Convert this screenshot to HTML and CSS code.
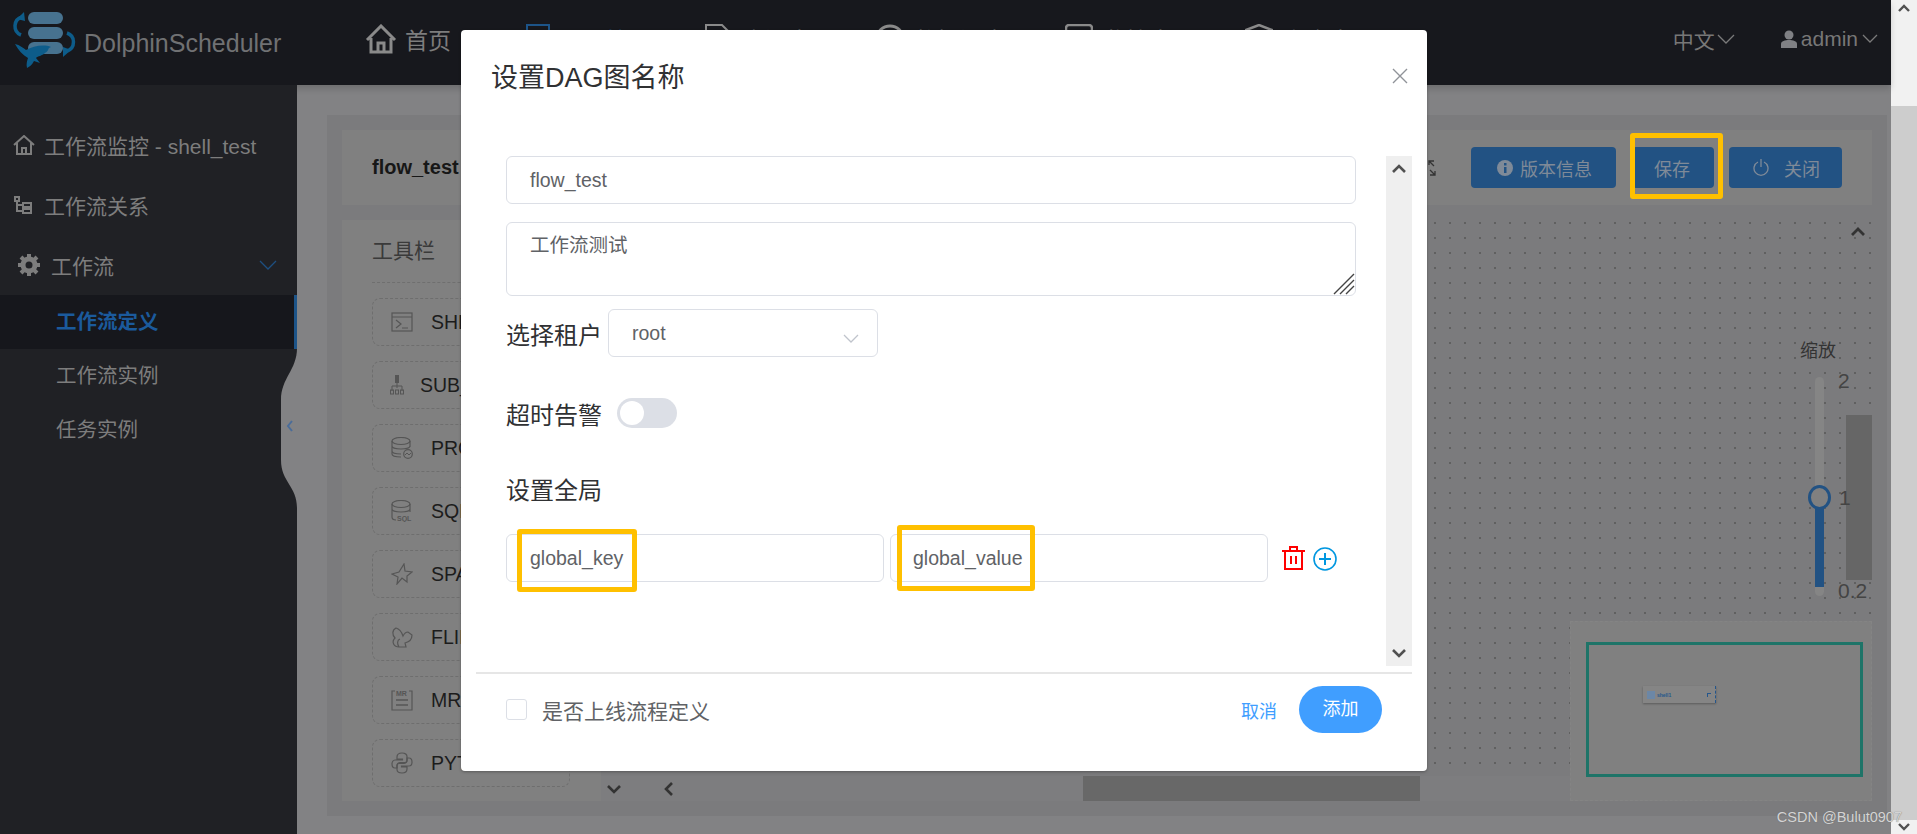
FILE: index.html
```html
<!DOCTYPE html>
<html lang="zh-CN">
<head>
  <meta charset="UTF-8" />
  <title>DolphinScheduler</title>
  <link rel="stylesheet" href="styles.css">
</head>
<body>

<div class="page">
  <header class="topbar">
    <div class="logo">
      <svg class="logo-mark" viewBox="0 0 72 58" width="72" height="58">
        <rect x="19" y="1" width="35" height="12" rx="6" fill="#47728f"/>
        <rect x="19" y="16" width="35" height="12" rx="6" fill="#47728f"/>
        <rect x="19" y="31" width="35" height="12" rx="6" fill="#47728f"/>
        <path d="M13 6 A9.5 9.5 0 0 0 12 24" fill="none" stroke="#0d5c8a" stroke-width="3.5"/>
        <path d="M8 8 L15 1 L16 10 Z" fill="#0d5c8a"/>
        <path d="M58 22 A9.5 9.5 0 0 1 58 40" fill="none" stroke="#0d5c8a" stroke-width="3.5"/>
        <path d="M62 39 L54 46 L54 36 Z" fill="#0d5c8a"/>
        <path d="M6 33 C11 34 14 37 17 39 C24 35 35 33 42 36 C38 37 41 39 36 42 C33 45 29 45 27 47 L31 52 L25 50 C23 54 20 56 18 57 C17 53 18 50 19 47 C14 44 9 39 6 33 Z" fill="#0d5c8a"/>
      </svg>
      <span class="logo-text">DolphinScheduler</span>
    </div>
    <nav class="nav">
      <div class="nav-item">
        <svg class="nav-icon nav-icon-home" viewBox="0 0 32 30" width="32" height="30"><path d="M2 16 L16 2 L30 16 M6 14 V28 H26 V14 M13 28 V19 H19 V28" fill="none" stroke="#8a8a8a" stroke-width="3"/></svg>
        <span>首页</span>
      </div>
      <div class="nav-item nav-active">
        <svg class="nav-icon" viewBox="0 0 24 30" width="24" height="30"><rect x="1" y="1" width="22" height="27" fill="none" stroke="#1d5488" stroke-width="2"/></svg>
        <span>项目管理</span>
      </div>
      <div class="nav-item">
        <svg class="nav-icon" viewBox="0 0 28 30" width="28" height="30"><path d="M2 1 H18 L26 9 V29 H2 Z" fill="none" stroke="#8a8a8a" stroke-width="2"/></svg>
        <span>资源中心</span>
      </div>
      <div class="nav-item">
        <svg class="nav-icon" viewBox="0 0 28 30" width="28" height="30"><ellipse cx="14" cy="14" rx="13" ry="12" fill="none" stroke="#8a8a8a" stroke-width="3"/></svg>
        <span>数据源中心</span>
      </div>
      <div class="nav-item">
        <svg class="nav-icon" viewBox="0 0 28 30" width="28" height="30"><rect x="1" y="1" width="26" height="26" rx="3" fill="none" stroke="#8a8a8a" stroke-width="2.5"/></svg>
        <span>监控中心</span>
      </div>
      <div class="nav-item">
        <svg class="nav-icon" viewBox="0 0 28 30" width="28" height="30"><path d="M14 1 L27 6 V18 C27 24 20 28 14 30 C8 28 1 24 1 18 V6 Z" fill="none" stroke="#8a8a8a" stroke-width="2.5"/></svg>
        <span>安全中心</span>
      </div>
    </nav>
    <div class="topbar-right">
      <div class="lang">中文<svg viewBox="0 0 18 10" width="18" height="10"><path d="M1 1 L9 9 L17 1" fill="none" stroke="#7a7a7a" stroke-width="1.3"/></svg></div>
      <div class="user">
        <svg viewBox="0 0 16 18" width="16" height="18"><circle cx="8" cy="5" r="4.5" fill="#7f8084"/><path d="M0 18 V14 C0 11 4 10 8 10 C12 10 16 11 16 14 V18 Z" fill="#7f8084"/></svg>
        <span>admin</span>
        <svg viewBox="0 0 16 10" width="16" height="10"><path d="M1 1 L8 8 L15 1" fill="none" stroke="#7a7a7a" stroke-width="1.3"/></svg>
      </div>
    </div>
  </header>

  <div class="main">
    <aside class="sidebar">
      <div class="side-row side-first">
        <svg viewBox="0 0 22 20" width="22" height="20"><path d="M1 10 L11 1 L21 10 M4 8 V19 H18 V8 M9 19 V13 H13 V19" fill="none" stroke="#7d7d7d" stroke-width="2"/></svg>
        <span>工作流监控 - shell_test</span>
      </div>
      <div class="side-row">
        <svg viewBox="0 0 20 20" width="20" height="20"><path d="M2 2 H6 V6 H2 Z M4 6 V16 H10 M4 10 H10 M10 8 H18 V12 H10 Z M10 14 H18 V18 H10 Z" fill="none" stroke="#7d7d7d" stroke-width="2"/></svg>
        <span>工作流关系</span>
      </div>
      <div class="side-row side-group">
        <svg viewBox="0 0 22 22" width="22" height="22"><circle cx="11" cy="11" r="6" fill="none" stroke="#7d7d7d" stroke-width="5"/><path d="M11 0 V4 M11 18 V22 M0 11 H4 M18 11 H22 M3 3 L6 6 M16 16 L19 19 M3 19 L6 16 M16 6 L19 3" stroke="#7d7d7d" stroke-width="4"/></svg>
        <span>工作流</span>
        <svg class="side-chevron" viewBox="0 0 18 10" width="18" height="10"><path d="M1 1 L9 9 L17 1" fill="none" stroke="#1d4f80" stroke-width="1.3"/></svg>
      </div>
      <div class="side-sub side-sub-active">工作流定义</div>
      <div class="side-sub">工作流实例</div>
      <div class="side-sub">任务实例</div>
      <svg class="side-toggle" viewBox="0 0 16 160" width="16" height="160">
        <path d="M16 0 C16 22 0 30 0 52 V112 C0 134 16 138 16 160 Z" fill="#828284"/>
        <path d="M11 73 L7 78 L11 83" fill="none" stroke="#4a6c99" stroke-width="2"/>
      </svg>
    </aside>

    <main class="content">
      <div class="panel">
        <div class="panel-head">
          <div class="flow-name">flow_test</div>
          <svg class="fullscreen" viewBox="0 0 8 16" width="8" height="16"><path d="M1 5 V1 H6 M1 1 L6 6 M7 11 V15 H2 M7 15 L2 10" fill="none" stroke="#333" stroke-width="1.3"/></svg>
          <div class="btn btn-version">
            <svg viewBox="0 0 16 16" width="16" height="16"><circle cx="8" cy="8" r="8" fill="#7f8a98"/><rect x="7" y="7" width="2.5" height="6" fill="#225283"/><rect x="7" y="3" width="2.5" height="2.5" fill="#225283"/></svg>
            <span>版本信息</span>
          </div>
          <div class="btn btn-save">保存</div>
          <div class="btn btn-close">
            <svg viewBox="0 0 16 20" width="16" height="20"><path d="M5 4 A7 7 0 1 0 11 4 M8 1 V9" fill="none" stroke="#7f8a98" stroke-width="1.3"/></svg>
            <span>关闭</span>
          </div>
        </div>

        <div class="workspace">
          <div class="toolbar">
            <div class="toolbar-title">工具栏</div>
            <div class="tool">
              <svg viewBox="0 0 22 20" width="22" height="20"><rect x="1" y="1" width="20" height="18" fill="none" stroke="#555" stroke-width="1.2"/><path d="M1 5 H21 M5 8 L10 12 L5 16 M11 16 H17" fill="none" stroke="#555" stroke-width="1.2"/></svg>
              <span>SHELL</span>
            </div>
            <div class="tool tool-sub">
              <svg viewBox="0 0 14 20" width="14" height="20"><rect x="5" y="0" width="4" height="8" fill="#555"/><path d="M7 8 V13 M2 16 V11 H12 V16" fill="none" stroke="#555"/><rect x="0.5" y="15" width="3" height="4" fill="none" stroke="#555"/><rect x="5.5" y="15" width="3" height="4" fill="none" stroke="#555"/><rect x="10.5" y="15" width="3" height="4" fill="none" stroke="#555"/></svg>
              <span>SUB_PROCESS</span>
            </div>
            <div class="tool">
              <svg viewBox="0 0 22 22" width="22" height="22"><ellipse cx="10" cy="4" rx="9" ry="3.5" fill="none" stroke="#555" stroke-width="1.2"/><path d="M1 4 V17 C1 19 5 20 10 20 M19 4 V10 M1 9 C1 11 6 12 10 12 C14 12 19 11 19 9 M1 14 C1 16 5 17 10 17" fill="none" stroke="#555" stroke-width="1.2"/><circle cx="17" cy="17" r="4.3" fill="none" stroke="#555" stroke-width="1.2"/><path d="M14 18 L16 16 L18 18 L20 16" fill="none" stroke="#555"/></svg>
              <span>PROCEDURE</span>
            </div>
            <div class="tool">
              <svg viewBox="0 0 22 22" width="22" height="22"><ellipse cx="10" cy="4" rx="9" ry="3.5" fill="none" stroke="#555" stroke-width="1.2"/><path d="M1 4 V17 C1 19 3 20 5 20 M19 4 V12 M1 9 C1 11 6 12 10 12 C14 12 19 11 19 9" fill="none" stroke="#555" stroke-width="1.2"/><text class="tool-mark" x="6" y="21">SQL</text></svg>
              <span>SQL</span>
            </div>
            <div class="tool">
              <svg viewBox="0 0 22 22" width="22" height="22"><path d="M13 1 L14 8 L21 9 L16 13 L16 19 L11 15 L6 21 L7 14 L1 11 L8 9 Z" fill="none" stroke="#555" stroke-width="1.2"/></svg>
              <span>SPARK</span>
            </div>
            <div class="tool">
              <svg viewBox="0 0 22 22" width="22" height="22"><path d="M5 2 C1 4 1 9 4 12 C0 16 3 21 8 21 H15 L14 17 C18 16 21 13 21 9 L17 6 C15 6 13 8 12 10 C11 7 9 3 5 2 Z M8 21 C6 18 6 14 9 13" fill="none" stroke="#555" stroke-width="1.2"/></svg>
              <span>FLINK</span>
            </div>
            <div class="tool">
              <svg viewBox="0 0 22 22" width="22" height="22"><path d="M4 2 H1 V21 H21 V2 H18" fill="none" stroke="#555" stroke-width="1.2"/><text class="tool-mark" x="5" y="7">MR</text><path d="M5 11 H17 M5 16 H17" stroke="#555" stroke-width="1.4"/></svg>
              <span>MR</span>
            </div>
            <div class="tool">
              <svg viewBox="0 0 22 22" width="22" height="22">
                <path d="M11 1 C7.5 1 6 2.5 6 5 V7 H11.5 V8 H4 C2 8 1 10 1 12 C1 14.5 2 16 4 16 H6 V13.5 C6 11.8 7.5 10.5 9 10.5 H14 C15.5 10.5 16 9.5 16 8 V4.5 C16 2.5 14 1 11 1 Z" fill="none" stroke="#555" stroke-width="1.2"/>
                <path d="M11 21 C14.5 21 16 19.5 16 17 V15 H10.5 V14 H18 C20 14 21 12 21 10 C21 7.5 20 6 18 6 H16 V8.5 C16 10.2 14.5 11.5 13 11.5 H8 C6.5 11.5 6 12.5 6 14 V17.5 C6 19.5 8 21 11 21 Z" fill="none" stroke="#555" stroke-width="1.2"/>
              </svg>
              <span>PYTHON</span>
            </div>
          </div>

          <div class="canvas-wrap">
            <div class="canvas-col">
              <div class="canvas">
                <svg class="canvas-up" viewBox="0 0 14 10" width="14" height="10"><path d="M1 8 L7 2 L13 8" fill="none" stroke="#333" stroke-width="2.8"/></svg>
                <div class="scroll-thumb-v"></div>
                <div class="zoom-box">
                  <div class="zoom-title">缩放</div>
                  <div class="zoom-track"><div class="zoom-fill"></div><div class="zoom-handle"></div></div>
                  <span class="zoom-num zoom-2">2</span>
                  <span class="zoom-num zoom-1">1</span>
                  <span class="zoom-num zoom-02">0.2</span>
                </div>
                <div class="minimap">
                  <div class="minimap-view">
                    <div class="mini-node"><i class="mini-icon"></i><span>shell1</span><i class="mini-link"></i></div>
                  </div>
                </div>
              </div>
              <div class="hscroll">
                <svg class="hscroll-down" viewBox="0 0 14 10" width="14" height="10"><path d="M1 2 L7 8 L13 2" fill="none" stroke="#333" stroke-width="2.6"/></svg>
                <svg class="hscroll-left" viewBox="0 0 10 14" width="10" height="14"><path d="M8 1 L2 7 L8 13" fill="none" stroke="#333" stroke-width="2.6"/></svg>
                <div class="hscroll-thumb"></div>
              </div>
            </div>
          </div>
        </div>
      </div>
    </main>
  </div>
</div>

<div class="page-scroll">
  <div class="page-scroll-top"><svg viewBox="0 0 12 8" width="12" height="8"><path d="M1 7 L6 2 L11 7" fill="none" stroke="#505050" stroke-width="2.4"/></svg></div>
  <div class="page-scroll-bottom"><svg viewBox="0 0 12 8" width="12" height="8"><path d="M1 1 L6 6 L11 1" fill="none" stroke="#505050" stroke-width="2.4"/></svg></div>
</div>

<div class="modal">
  <div class="modal-head">
    <h2 class="modal-title">设置DAG图名称</h2>
    <svg class="modal-close" viewBox="0 0 16 16" width="16" height="16"><path d="M1 1 L15 15 M15 1 L1 15" fill="none" stroke="#909399" stroke-width="1.4"/></svg>
  </div>
  <div class="modal-body">
    <div class="form">
      <div class="field field-name">flow_test</div>
      <div class="field field-desc">工作流测试
        <svg class="resize-grip" viewBox="0 0 22 22" width="22" height="22"><path d="M1 21 L21 1 M7 21 L21 7 M13 21 L21 13" stroke="#444" stroke-width="1.4"/></svg>
      </div>
      <div class="form-row form-tenant">
        <label class="form-label">选择租户</label>
        <div class="field field-select">root
          <svg class="select-arrow" viewBox="0 0 16 10" width="16" height="10"><path d="M1 1 L8 8 L15 1" fill="none" stroke="#c0c4cc" stroke-width="1.3"/></svg>
        </div>
      </div>
      <div class="form-row form-timeout">
        <label class="form-label">超时告警</label>
        <div class="switch"><i class="switch-knob"></i></div>
      </div>
      <div class="form-label form-global">设置全局</div>
      <div class="form-row">
        <div class="field field-key">global_key</div>
        <div class="field field-value">global_value</div>
        <svg class="icon-delete" viewBox="0 0 23 24" width="23" height="24"><path d="M0 5 H23 M8 5 V1 H15 V5 M3 5 V23 H20 V5 M9 10 V18 M14 10 V18" fill="none" stroke="#ff0000" stroke-width="2"/></svg>
        <svg class="icon-add" viewBox="0 0 24 24" width="24" height="24"><circle cx="12" cy="12" r="11" fill="none" stroke="#0097e0" stroke-width="1.6"/><path d="M12 6 V18 M6 12 H18" stroke="#0097e0" stroke-width="2"/></svg>
      </div>
    </div>
    <div class="modal-scroll">
      <svg viewBox="0 0 14 10" width="14" height="10"><path d="M1 8 L7 2 L13 8" fill="none" stroke="#505050" stroke-width="2.6"/></svg>
      <svg viewBox="0 0 14 10" width="14" height="10"><path d="M1 2 L7 8 L13 2" fill="none" stroke="#505050" stroke-width="2.6"/></svg>
    </div>
  </div>
  <div class="modal-foot">
    <div class="check"><i class="check-box"></i><span>是否上线流程定义</span></div>
    <div class="foot-actions">
      <span class="link-cancel">取消</span>
      <span class="btn-add">添加</span>
    </div>
  </div>
</div>

<div class="mark mark-save"></div>
<div class="mark mark-key"></div>
<div class="mark mark-value"></div>
<div class="watermark">CSDN @Bulut0907</div>

</body>
</html>
```

FILE: styles.css
```css
:root {
  --font: "Liberation Sans", "Noto Sans CJK SC", sans-serif;
  --topbar: #17181d;
  --side: #202125;
  --dim-bg: #828284;
  --panel: #7b7b7d;
  --card: #808080;
  --dim-text: #7d7d7d;
  --dim-blue: #225283;
  --field-border: #dcdfe6;
  --mark: #ffc000;
}
* { box-sizing: border-box; }
html, body {
  margin: 0;
  height: 834px;
  overflow: hidden;
}
body {
  display: flex;
  font-family: var(--font);
  background: var(--dim-bg);
  color: var(--dim-text);
}
.page {
  flex: 1;
  display: flex;
  flex-direction: column;
  min-width: 0;
}

/* top bar */
.topbar {
  height: 85px;
  flex: none;
  display: flex;
  align-items: center;
  padding-bottom: 8px;
  background: var(--topbar);
  box-shadow: 0 4px 6px rgba(0,0,0,.15);
  position: relative;
}
.logo {
  width: 365px;
  flex: none;
  display: flex;
  align-items: center;
  padding-left: 9px;
}
.logo-mark { margin-top: 3px; }
.logo-text {
  margin-left: 3px;
  font-size: 25px;
  color: #707173;
  margin-top: 10px;
}
.nav {
  display: grid;
  grid-template-columns: 161px 178px 172px 189px 180px auto;
}
.nav-item {
  display: flex;
  align-items: center;
  gap: 10px;
  font-size: 23px;
  color: #7d7d7d;
}
.nav-active { color: #1d5488; }
.nav-icon-home { margin-right: -2px; }
.topbar-right {
  margin-left: auto;
  display: flex;
  align-items: center;
  padding-right: 13px;
  gap: 46px;
  font-size: 21px;
  color: #777;
}
.lang, .user {
  display: flex;
  align-items: center;
  gap: 2px;
}
.user { gap: 4px; }

.main {
  flex: 1;
  display: flex;
  min-height: 0;
}

/* left menu */
.sidebar {
  width: 297px;
  flex: none;
  padding-top: 30px;
  background: var(--side);
  position: relative;
  font-size: 21px;
}
.side-row {
  height: 60px;
  display: flex;
  align-items: center;
  gap: 11px;
  padding-left: 13px;
  color: var(--dim-text);
}
.side-first { gap: 9px; }
.side-group {
  padding-left: 18px;
  gap: 11px;
}
.side-chevron {
  margin-left: auto;
  margin-right: 20px;
}
.side-sub {
  height: 54px;
  line-height: 54px;
  padding-left: 56px;
  font-size: 20.5px;
}
.side-sub-active {
  background: #16171c;
  border-right: 3px solid #1d5488;
  color: #1b5a9c;
  font-weight: 700;
}
.side-toggle {
  position: absolute;
  right: 0;
  top: 263px;
}

/* content */
.content {
  flex: 1;
  min-width: 0;
  padding: 30px 4px 18px 30px;
}
.panel {
  height: 100%;
  padding: 15px;
  background: var(--panel);
  display: flex;
  flex-direction: column;
  gap: 15px;
}
.panel-head {
  height: 75px;
  flex: none;
  display: flex;
  align-items: center;
  padding: 0 30px;
  background: var(--card);
}
.flow-name {
  font-size: 20px;
  font-weight: 700;
  color: #171717;
}
.fullscreen { margin-left: auto; margin-right: 35px; }
.btn {
  height: 41px;
  display: flex;
  align-items: center;
  border-radius: 4px;
  background: var(--dim-blue);
  font-size: 18px;
  color: #7f8a98;
}
.btn-version { width: 145px; padding-left: 26px; gap: 7px; }
.btn-save { width: 82px; margin-left: 16px; justify-content: center; padding-right: 2px; }
.btn-close { width: 113px; margin-left: 15px; padding-left: 24px; gap: 15px; }

.workspace {
  flex: 1;
  display: flex;
  min-height: 0;
}
.toolbar {
  width: 259px;
  flex: none;
  padding: 0 30px;
  background: var(--card);
}
.toolbar-title {
  height: 63px;
  line-height: 61px;
  margin-bottom: 15px;
  border-bottom: 1px dashed #6f6f6f;
  font-size: 21px;
  color: #3a3a3a;
}
.tool {
  width: 198px;
  height: 48px;
  margin-bottom: 15px;
  display: flex;
  align-items: center;
  gap: 18px;
  padding-left: 18px;
  border: 1px dashed #6e6e6e;
  border-radius: 8px;
  font-size: 19.5px;
  color: #1c1c1c;
}
.tool-sub { padding-left: 17px; gap: 16px; }
.tool-mark {
  font-family: var(--font);
  font-size: 7px;
  font-weight: 700;
  fill: #555;
}

.canvas-wrap {
  flex: 1;
  min-width: 0;
}
.canvas-col {
  height: 100%;
  display: flex;
  flex-direction: column;
}
.canvas {
  flex: 1;
  position: relative;
  background-color: var(--panel);
  background-image: radial-gradient(circle at 1px 1px, #606060 .8px, transparent 1px);
  background-size: 15px 15px;
  background-position: 8px 2px;
}
.canvas-up {
  position: absolute;
  right: 7px;
  top: 7px;
}
.scroll-thumb-v {
  position: absolute;
  right: 0;
  top: 195px;
  width: 26px;
  height: 165px;
  background: #666;
}
.zoom-box {
  position: absolute;
  left: 1184px;
  top: 116px;
  width: 70px;
  height: 265px;
}
.zoom-title {
  margin-left: 15px;
  font-size: 18px;
  color: #333;
}
.zoom-track {
  position: absolute;
  left: 30px;
  top: 41px;
  width: 9px;
  height: 219px;
  border-radius: 5px;
  background: #858585;
}
.zoom-fill {
  position: absolute;
  left: 0;
  right: 0;
  top: 123px;
  bottom: 9px;
  background: var(--dim-blue);
}
.zoom-handle {
  position: absolute;
  left: -7px;
  top: 108px;
  width: 23px;
  height: 25px;
  border: 3.5px solid var(--dim-blue);
  border-radius: 50%;
  background: #808080;
}
.zoom-num {
  position: absolute;
  font-size: 21px;
  color: #444;
}
.zoom-2 { left: 53px; top: 33px; }
.zoom-1 { left: 54px; top: 150px; }
.zoom-02 { left: 53px; top: 243px; }
.minimap {
  position: absolute;
  right: 0;
  bottom: -25px;
  z-index: 2;
  width: 302px;
  height: 180px;
  padding: 20px 8px 24px 15px;
  background: var(--card);
  border: 1px dashed #848484;
}
.minimap-view {
  height: 135px;
  border: 3px solid #1e7468;
  position: relative;
}
.mini-node {
  position: absolute;
  left: 54px;
  top: 41px;
  width: 73px;
  height: 17px;
  display: flex;
  align-items: center;
  gap: 2px;
  padding-left: 4px;
  background: #858585;
  border-right: 1px dashed #24568c;
  box-shadow: 0 1px 2px rgba(0,0,0,.3);
  font-size: 5px;
  font-weight: 700;
  color: #24568c;
}
.mini-icon {
  width: 8px;
  height: 8px;
  background: #6c87a6;
  display: block;
}
.mini-link {
  width: 4px;
  height: 4px;
  margin-left: auto;
  margin-right: 4px;
  border-top: 1px solid #24568c;
  border-left: 1px solid #24568c;
  display: block;
}
.hscroll {
  height: 25px;
  flex: none;
  position: relative;
  background: #7d7d7f;
}
.hscroll-down { position: absolute; left: 6px; top: 8px; }
.hscroll-left { position: absolute; left: 63px; top: 6px; }
.hscroll-thumb {
  position: absolute;
  left: 482px;
  top: 0;
  width: 337px;
  height: 25px;
  background: #686868;
}

/* browser scrollbar */
.page-scroll {
  width: 26px;
  flex: none;
  display: flex;
  flex-direction: column;
  justify-content: space-between;
  background: #cdcdcd;
}
.page-scroll-top {
  height: 106px;
  background: #f1f1f1;
  display: flex;
  justify-content: center;
  padding-top: 4px;
}
.page-scroll-bottom {
  height: 14px;
  background: #f1f1f1;
  display: flex;
  justify-content: center;
  align-items: center;
}

/* dialog */
.modal {
  position: absolute;
  left: 461px;
  top: 30px;
  width: 966px;
  height: 741px;
  background: #fff;
  border-radius: 4px;
  box-shadow: 0 1px 3px rgba(0,0,0,.3);
  display: flex;
  flex-direction: column;
}
.modal-head {
  height: 126px;
  flex: none;
  position: relative;
  padding: 28px 30px 0;
}
.modal-title {
  margin: 0;
  font-size: 27px;
  font-weight: 400;
  line-height: 40px;
  color: #303133;
}
.modal-close {
  position: absolute;
  right: 19px;
  top: 38px;
}
.modal-body {
  height: 510px;
  flex: none;
  margin: 0 15px;
  display: flex;
  padding-left: 30px;
}
.form {
  flex: 1;
  min-width: 0;
  padding-right: 30px;
}
.field {
  height: 48px;
  line-height: 46px;
  padding: 0 23px;
  border: 1px solid var(--field-border);
  border-radius: 6px;
  font-size: 19.5px;
  color: #606266;
  position: relative;
}
.field-name { margin-bottom: 18px; }
.field-desc {
  height: 74px;
  line-height: 44px;
  margin-bottom: 13px;
}
.resize-grip {
  position: absolute;
  right: 0;
  bottom: 0;
}
.form-row {
  display: flex;
  align-items: center;
}
.form-label {
  font-size: 24px;
  color: #303133;
}
.form-tenant { gap: 6px; }
.field-select { width: 270px; }
.select-arrow {
  position: absolute;
  right: 18px;
  top: 24px;
}
.form-timeout {
  margin-top: 41px;
  height: 30px;
  gap: 15px;
}
.switch {
  width: 60px;
  height: 30px;
  border-radius: 15px;
  background: #dcdfe6;
  padding: 3px;
}
.switch-knob {
  display: block;
  width: 24px;
  height: 24px;
  border-radius: 50%;
  background: #fff;
}
.form-global {
  margin-top: 47px;
  margin-bottom: 28px;
  line-height: 31px;
}
.field-key, .field-value { width: 378px; }
.field-value { margin-left: 6px; padding-left: 22px; }
.icon-delete { margin-left: 14px; }
.icon-add { margin-left: 8px; margin-top: 2px; }
.modal-scroll {
  width: 26px;
  flex: none;
  background: #efefef;
  display: flex;
  flex-direction: column;
  justify-content: space-between;
  align-items: center;
  padding: 8px 0;
}
.modal-foot {
  flex: 1;
  margin: 6px 15px 0;
  border-top: 2px solid #e6e6e6;
  display: flex;
  align-items: center;
  justify-content: space-between;
  padding: 0 30px 26px;
}
.check {
  display: flex;
  align-items: center;
  gap: 15px;
  font-size: 21px;
  color: #606266;
}
.check-box {
  display: block;
  width: 21px;
  height: 21px;
  border: 1px solid var(--field-border);
  border-radius: 3px;
}
.foot-actions {
  display: flex;
  align-items: center;
  gap: 22px;
  font-size: 18px;
}
.link-cancel { color: #409eff; }
.btn-add {
  width: 83px;
  height: 47px;
  line-height: 47px;
  text-align: center;
  border-radius: 24px;
  background: #409eff;
  color: #fff;
}

/* yellow boxes drawn on the shot */
.mark {
  position: absolute;
  border: 5px solid var(--mark);
  border-radius: 3px;
}
.mark-save { left: 1630px; top: 133px; width: 93px; height: 66px; }
.mark-key { left: 517px; top: 529px; width: 120px; height: 63px; }
.mark-value { left: 897px; top: 525px; width: 138px; height: 66px; }
.watermark {
  position: absolute;
  right: 15px;
  top: 809px;
  font-size: 14.5px;
  color: #d4d4d4;
  text-shadow: 0 0 1px #666;
  white-space: nowrap;
}
```
